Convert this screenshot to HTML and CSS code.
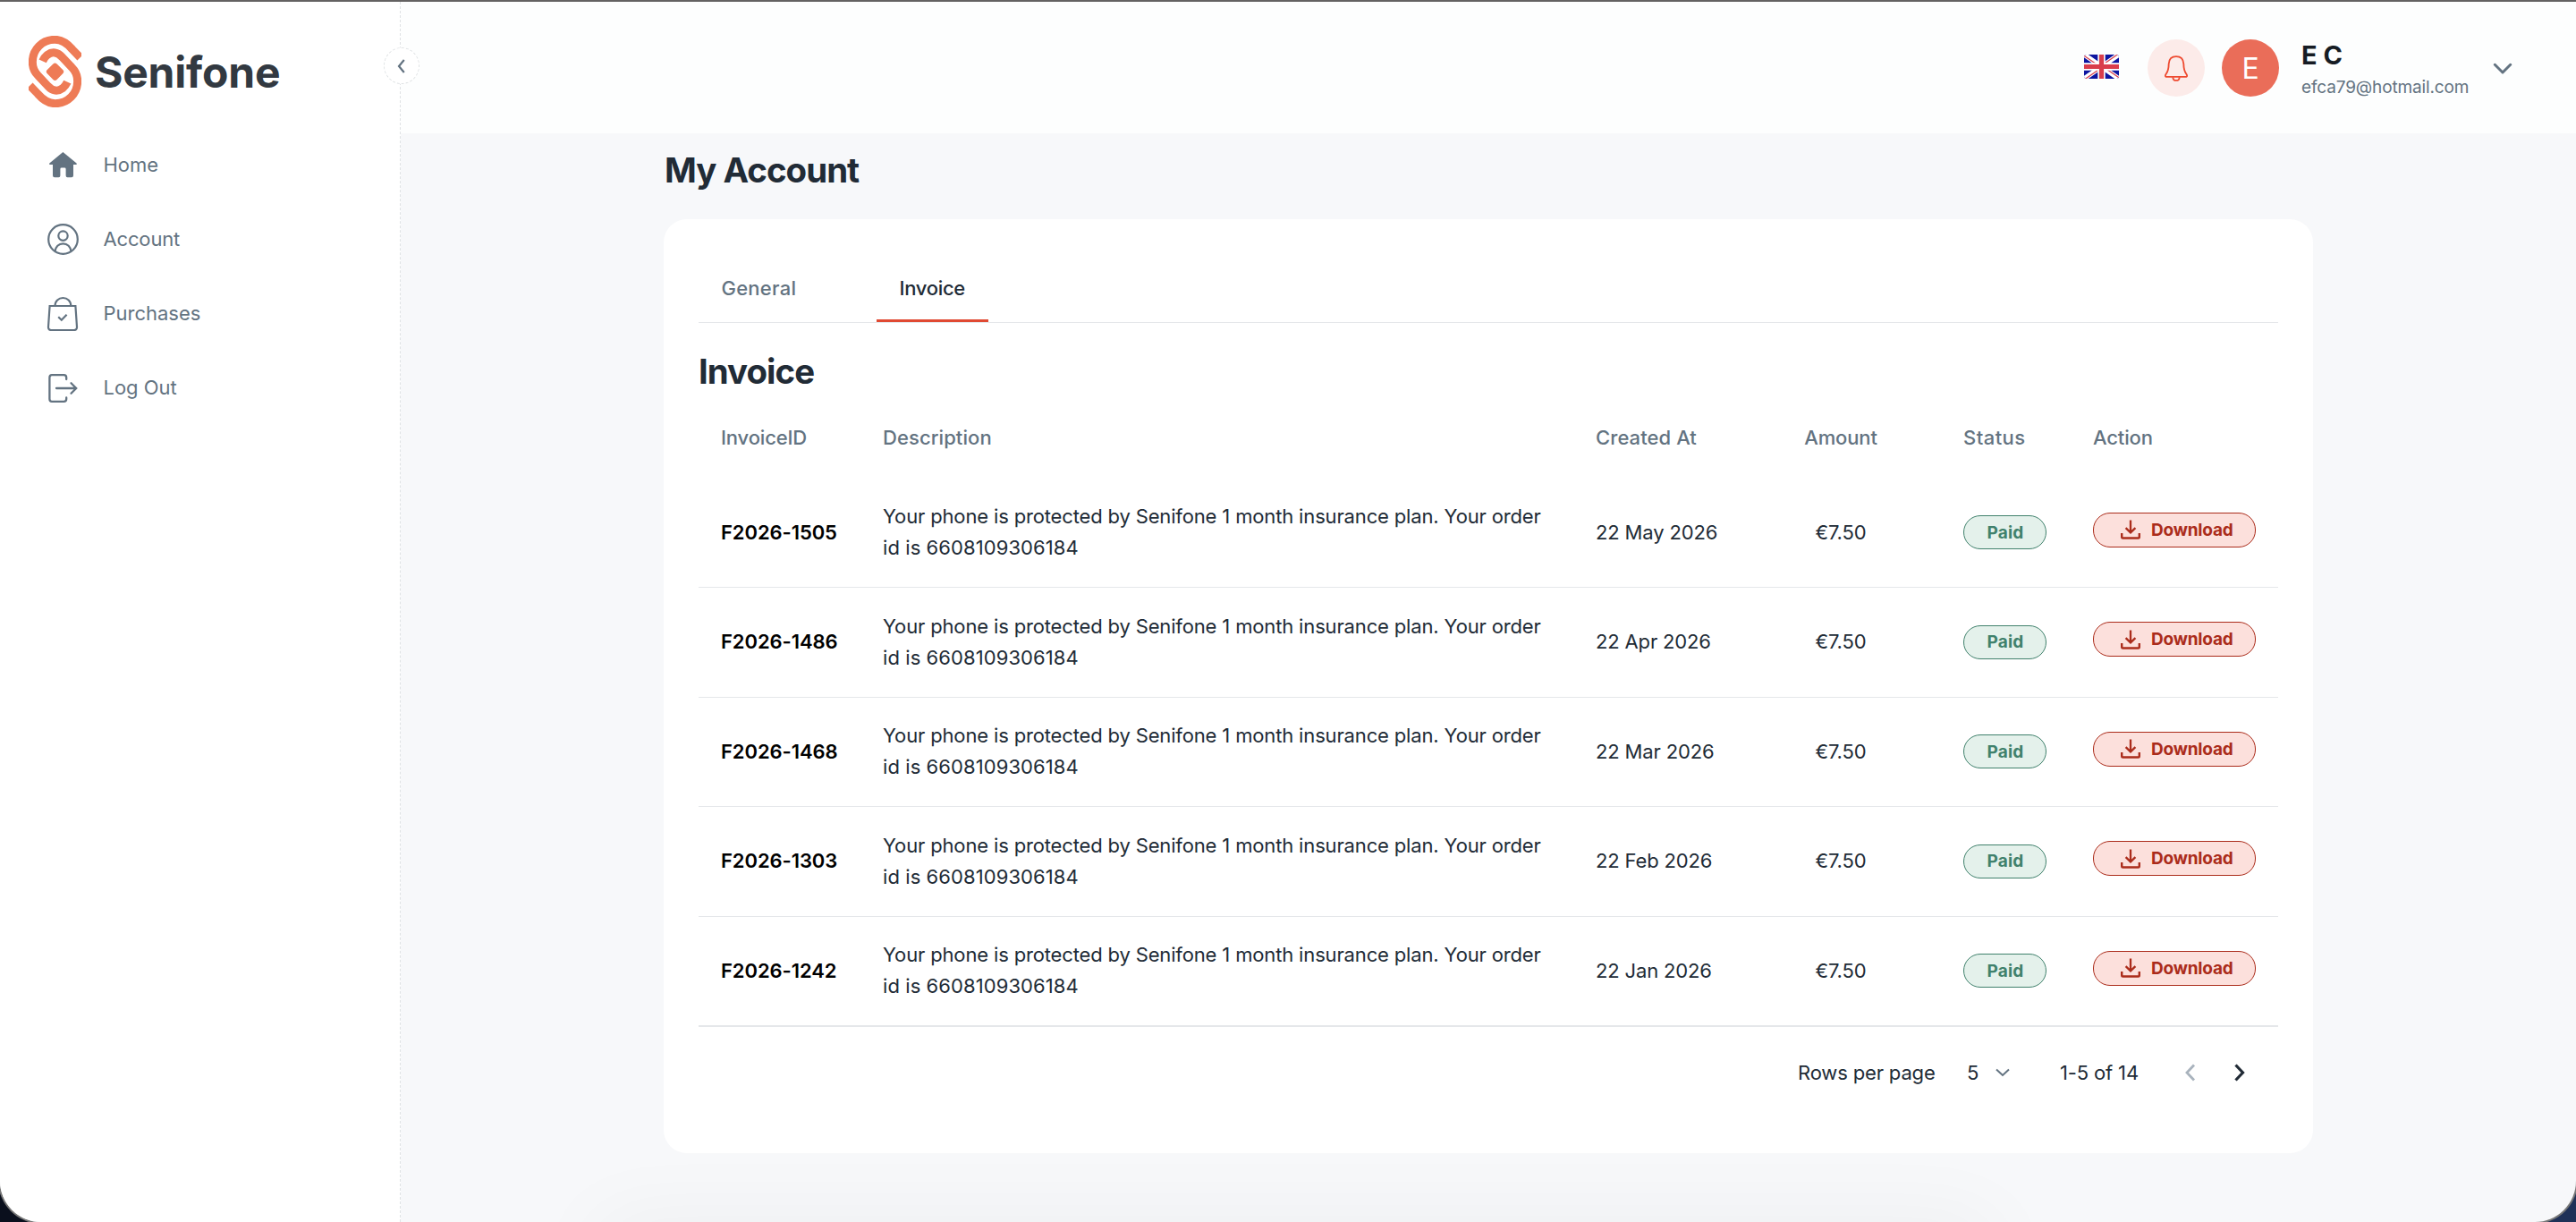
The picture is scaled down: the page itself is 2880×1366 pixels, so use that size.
FILE: index.html
```html
<!DOCTYPE html>
<html lang="en">
<head>
<meta charset="utf-8">
<title>Senifone - My Account</title>
<link rel="stylesheet" href="styles.css">
</head>
<body>
<svg class="sprite" aria-hidden="true">
  <symbol id="download" viewBox="0 0 22 22">
    <path d="M11 .5V14M5.6 9.2 11 14.4l5.4-5.2" fill="none" stroke="currentColor" stroke-width="2.3"/>
    <path d="M1.2 15v4.2q0 1.3 1.3 1.3h17q1.3 0 1.3-1.3V15" fill="none" stroke="currentColor" stroke-width="2.4"/>
  </symbol>
</svg>
<div class="window">
  <aside class="sidebar">
    <div class="brand">
      <svg class="brand-mark" viewBox="0 0 177 240">
        <g fill="none" stroke="#ee7b56" stroke-width="27">
          <path d="M173 73 146 45C128 24 110 13 88 13 45 13 13 46 13 88c0 20 7 34 19 46l32 34c16 18 34 20 50 8Q124 168 130 155"/>
          <path d="M4 167 31 195C49 216 67 227 89 227 132 227 164 194 164 152c0-20-7-34-19-46L113 72C97 54 79 52 63 64Q53 72 47 85"/>
        </g>
        <rect x="65.500" y="97.500" width="46" height="46" rx="9" fill="#ee7b56" transform="rotate(45 88.5 120.5)"/>
      </svg>
      <span class="brand-name">Senifone</span>
    </div>
    <nav class="nav">
      <a class="nav-item"><svg class="nav-icon" viewBox="0 0 40 40"><path d="M20.4 6 5.3 18.6q-.8 1.3.5 1.4H9v12.2q0 2.1 2 2.1h4.6q1.8 0 1.8-2V25q0-1.4 1.4-1.4h3.4q1.4 0 1.4 1.4v7.3q0 2 1.800 2H30q2 0 2-2.100V20h3.200q1.200-.2.4-1.400Z" fill="currentColor"/></svg>Home</a>
      <a class="nav-item account"><svg class="nav-icon" viewBox="0 0 40 40"><g fill="none" stroke="currentColor" stroke-width="2.200"><circle cx="20.500" cy="20.500" r="16.300"/><circle cx="20.500" cy="16.600" r="5.200"/><path d="M11.600 34c.3-5 4-8.700 8.900-8.700s8.600 3.700 8.900 8.700"/></g></svg>Account</a>
      <a class="nav-item"><svg class="nav-icon" viewBox="0 0 40 40"><g fill="none" stroke="currentColor" stroke-width="2.200"><path d="M5.600 12H34.400L36 35.500q.1 3.500-3.500 3.500H7.500Q3.900 39 4 35.500ZM11.500 12c0-5.500 4-9 8.900-9s8.900 3.500 8.900 9"/><path d="m15.200 24.200 3.600 3.600 5.800-6"/></g></svg>Purchases</a>
      <a class="nav-item"><svg class="nav-icon" viewBox="0 0 40 40"><g fill="none" stroke="currentColor" stroke-width="2.300" stroke-linecap="round"><path d="M24.200 11V9q0-2.800-2.800-2.800H8Q5.400 6.200 5.400 9V33q0 2.800 2.600 2.800h13.400q2.800 0 2.800-2.800V31.500M13 21H35M29.500 15.300 35.200 21l-5.700 5.700"/></g></svg>Log Out</a>
    </nav>
    <button class="collapse" aria-label="Collapse"><svg viewBox="0 0 12 18"><path d="M8.800 2 3 9l5.800 7" fill="none" stroke="currentColor" stroke-width="2.200"/></svg></button>
  </aside>

  <div class="content">
    <header class="header">
      <svg class="flag" viewBox="0 0 39 27">
        <rect width="39" height="27" fill="#0d15a0"/>
        <path d="M0 0 39 27M39 0 0 27" stroke="#fff" stroke-width="5.400"/>
        <path d="M-1 .5 16 12.300M40 26.500 23 14.700M38 -.5 21 11.300M1 27.500 18 15.700" stroke="#d8404f" stroke-width="1.300"/>
        <path d="M19.500 0V27M0 13.500H39" stroke="#fff" stroke-width="8.400"/>
        <path d="M19.500 0V27M0 13.500H39" stroke="#d93d4b" stroke-width="5.200"/>
      </svg>
      <span class="bell"><svg viewBox="0 0 78 86"><g fill="none" stroke="#ee4a30" stroke-width="5.500" stroke-linejoin="round"><path d="M14 28C15 10 24 3 39 3s24 7 25 25c0 17 2 24 9 34q5 7 0 9H5q-5-2 0-9c7-10 9-17 9-34Z"/><path d="M28 72c0 15 22 15 22 0"/></g></svg></span>
      <span class="avatar">E</span>
      <div class="user">
        <span class="user-name">E C</span>
        <span class="user-mail">efca79@hotmail.com</span>
      </div>
      <svg class="user-caret" viewBox="0 0 28 28"><path d="m5.300 10.300 8.700 8.700 8.700-8.700" fill="none" stroke="currentColor" stroke-width="3" stroke-linecap="round" stroke-linejoin="round"/></svg>
    </header>

    <main class="main">
      <h1 class="title">My Account</h1>
      <section class="card">
        <div class="tabs">
          <a class="tab">General</a>
          <a class="tab active">Invoice</a>
        </div>
        <h2 class="section-title">Invoice</h2>
        <div class="table">
          <div class="row head"><span class="tight">InvoiceID</span><span>Description</span><span>Created At</span><span class="amount tight">Amount</span><span class="loose">Status</span><span class="tight">Action</span></div>
          <div class="row"><b>F2026-1505</b><span class="desc">Your phone is protected by Senifone 1 month insurance plan. Your order <span class="order">id is 6608109306184</span></span><span>22 May 2026</span><span class="amount">€7.50</span><span><i class="paid">Paid</i></span><span><a class="download"><svg><use href="#download"/></svg>Download</a></span></div>
          <div class="row"><b>F2026-1486</b><span class="desc">Your phone is protected by Senifone 1 month insurance plan. Your order <span class="order">id is 6608109306184</span></span><span>22 Apr 2026</span><span class="amount">€7.50</span><span><i class="paid">Paid</i></span><span><a class="download"><svg><use href="#download"/></svg>Download</a></span></div>
          <div class="row"><b>F2026-1468</b><span class="desc">Your phone is protected by Senifone 1 month insurance plan. Your order <span class="order">id is 6608109306184</span></span><span>22 Mar 2026</span><span class="amount">€7.50</span><span><i class="paid">Paid</i></span><span><a class="download"><svg><use href="#download"/></svg>Download</a></span></div>
          <div class="row"><b>F2026-1303</b><span class="desc">Your phone is protected by Senifone 1 month insurance plan. Your order <span class="order">id is 6608109306184</span></span><span>22 Feb 2026</span><span class="amount">€7.50</span><span><i class="paid">Paid</i></span><span><a class="download"><svg><use href="#download"/></svg>Download</a></span></div>
          <div class="row"><b>F2026-1242</b><span class="desc">Your phone is protected by Senifone 1 month insurance plan. Your order <span class="order">id is 6608109306184</span></span><span>22 Jan 2026</span><span class="amount">€7.50</span><span><i class="paid">Paid</i></span><span><a class="download"><svg><use href="#download"/></svg>Download</a></span></div>
        </div>
        <div class="pagination">
          <span>Rows per page</span>
          <span class="page-size">5<svg viewBox="0 0 18 10"><path d="m2 1.500 7 6.500 7-6.500" fill="none" stroke="#637381" stroke-width="2"/></svg></span>
          <span>1-5 of 14</span>
          <svg class="page-arrow" viewBox="0 0 24 24"><path d="m17 3.500-8 8.500 8 8.500" fill="none" stroke="#a9b3bd" stroke-width="2.800"/></svg>
          <svg class="page-arrow" viewBox="0 0 24 24"><path d="m7.500 3.500 8 8.500-8 8.500" fill="none" stroke="#212b36" stroke-width="3.200"/></svg>
        </div>
      </section>
    </main>
    <div class="dock-shade"></div>
  </div>
</div>
</body>
</html>
```
FILE: styles.css
```css
* { box-sizing: border-box; }

body {
  margin: 0;
  height: 1366px;
  overflow: hidden;
  background: linear-gradient(90deg, #0a0f1d 50%, #1f3157 50%);
  color: #212b36;
  font: 400 22px/35px Inter, "Liberation Sans", sans-serif;
  letter-spacing: -0.15px;
}

.sprite { display: block; width: 0; height: 0; }

.window {
  display: flex;
  height: 1366px;
  overflow: hidden;
  border-top: 2px solid #646262;
  border-radius: 0 0 46px 46px;
  background: #f7f8fa;
  box-shadow: 0 0 0 2px #777;
}

/* Sidebar */
.sidebar {
  position: relative;
  z-index: 1;
  flex: none;
  width: 448px;
  padding-top: 38px;
  border-right: 1px dashed #dfe2e4;
  background: #fff;
}

.brand {
  display: flex;
  align-items: center;
  gap: 15px;
  padding-left: 32px;
}

.brand-mark { width: 59px; height: 80px; }

.brand-name {
  color: #323941;
  font-size: 48px;
  font-weight: 700;
  line-height: 82px;
  height: 80px;
  letter-spacing: -0.2px;
}

.nav { margin-top: 22.5px; }

.nav-item {
  display: flex;
  align-items: center;
  gap: 25.5px;
  height: 83px;
  padding-left: 50px;
  color: #637381;
  letter-spacing: -0.02px;
}

.nav-item.account { letter-spacing: -0.15px; }

.nav-icon { width: 40px; height: 40px; }

.collapse {
  position: absolute;
  top: 51px;
  left: 429px;
  display: grid;
  place-items: center;
  width: 40px;
  height: 41px;
  padding: 0;
  border: 1px dashed #dfe2e4;
  border-radius: 50%;
  background: #fff;
  color: #637381;
}

.collapse svg { width: 12px; height: 18px; }

/* Header */
.content {
  position: relative;
  flex: 1;
}

.header {
  display: flex;
  align-items: center;
  justify-content: flex-end;
  height: 147px;
  padding: 1px 68px 0 0;
  background: #fdfefe;
}

.flag {
  width: 39px;
  height: 27px;
  margin: -3px 32px 0 0;
  border-radius: 3px;
}

.bell,
.avatar {
  display: grid;
  place-items: center;
  width: 64px;
  height: 64px;
  border-radius: 50%;
}

.bell {
  margin-right: 19px;
  background: #fcebe9;
}

.bell svg { width: 26px; height: 29px; }

.avatar {
  margin-right: 25px;
  background: #ea6d59;
  color: #fff;
  font-size: 32px;
}

.user {
  display: flex;
  flex-direction: column;
  width: 211px;
  padding-top: 6px;
}

.user-name {
  color: #161c24;
  font-size: 29px;
  font-weight: 700;
  line-height: 36px;
  letter-spacing: 0;
}

.user-mail {
  color: #637381;
  font-size: 19px;
  letter-spacing: -0.13px;
}

.user-caret {
  width: 28px;
  height: 28px;
  color: #637381;
}

/* Page */
.main {
  width: 1844px;
  margin-left: 294px;
  padding-top: 11px;
}

.title,
.section-title {
  margin: 0;
  font-size: 38.4px;
  font-weight: 650;
  line-height: 60px;
  letter-spacing: -0.95px;
}

.title { padding-left: 1px; }

.card {
  height: 1044px;
  margin-top: 25px;
  padding: 39px;
  border-radius: 26px;
  background: #fff;
}

.tabs {
  display: flex;
  gap: 64px;
  border-bottom: 1px solid #e5e7ea;
}

.tab {
  width: 135px;
  height: 76px;
  padding-left: 25.5px;
  color: #637381;
  font-weight: 550;
  line-height: 76px;
  letter-spacing: 0.25px;
}

.tab.active {
  width: 125px;
  box-shadow: inset 0 -3px #e04a33;
  color: #212b36;
  letter-spacing: -0.3px;
}

.section-title { margin-top: 24px; }

/* Invoices */
.table { border-bottom: 1px solid #e5e7ea; }

.row {
  display: grid;
  grid-template-columns: 181px 797px 137px 274px 145px 182px;
  align-items: center;
  height: 122.5px;
  padding-left: 25px;
  border-bottom: 1px solid #e5e7ea;
  white-space: nowrap;
}

.row.head {
  height: 89.5px;
  border-bottom: 0;
  color: #637381;
  font-weight: 550;
  letter-spacing: 0.08px;
}

.row.head .tight { letter-spacing: -0.15px; }
.row.head .loose { letter-spacing: 0.45px; }

.row b {
  color: #000;
  font-weight: 600;
  letter-spacing: -0.08px;
}

.row .amount { text-align: center; }

.desc {
  width: 750px;
  white-space: normal;
}

.order {
  display: block;
  letter-spacing: 0.08px;
}

.paid,
.download {
  display: flex;
  align-items: center;
  height: 38px;
  border: 1px solid;
  border-radius: 19px;
  font-size: 19px;
  font-style: normal;
  font-weight: 700;
}

.paid {
  justify-content: center;
  width: 93px;
  padding-left: 1px;
  background: #e4f1eb;
  color: #40816c;
  letter-spacing: 0.15px;
}

.download {
  gap: 12px;
  width: 182px;
  height: 39px;
  margin-bottom: 6px;
  padding-left: 30px;
  background: #fce0dc;
  color: #ab2c1b;
  letter-spacing: -0.2px;
}

.download svg { width: 22px; height: 22px; }

.pagination {
  display: grid;
  grid-template-columns: 189px 104px 133px 56px 24px;
  align-items: center;
  justify-content: end;
  height: 102px;
  padding-right: 31px;
}

.page-size {
  display: flex;
  align-items: center;
  gap: 18px;
}

.page-size svg { width: 18px; height: 10px; }

.page-arrow { width: 24px; height: 24px; }

/* Faint shade under the bottom edge of the page */
.dock-shade {
  position: absolute;
  bottom: -62px;
  left: 230px;
  width: 1540px;
  height: 50px;
  border-radius: 40px;
  box-shadow: 0 0 90px 20px rgba(0, 0, 0, 0.04);
}
```
